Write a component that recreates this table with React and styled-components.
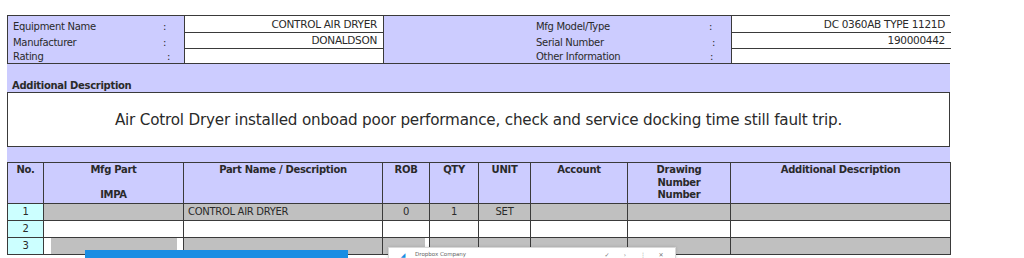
import React from 'react';
import styled, { createGlobalStyle } from 'styled-components';

const Global = createGlobalStyle`
  html, body { margin: 0; padding: 0; background: #fff; overflow: hidden; }
  body { font-family: "DejaVu Sans", Verdana, sans-serif; color: #2a2a2a; }
`;

const LAV = '#ccccff';
const LINE = '#3a3a3a';

const Page = styled.div`
  position: relative;
  width: 1024px;
  height: 258px;
  overflow: hidden;
`;

const Sheet = styled.div`
  width: 943px;
  margin-left: 7px;
  padding-top: 15px;
  font-size: 10px;
  letter-spacing: -0.3px;
`;

const Info = styled.div`
  display: grid;
  grid-template-columns: 176px 200px 347px 220px;
  border: 1px solid ${LINE};
  background: ${LAV};
  box-sizing: border-box;
`;

const LabelCol = styled.div`
  display: flex;
  flex-direction: column;
  padding-top: 2px;
`;

const LabelRow = styled.div`
  display: flex;
  height: ${p => p.$h}px;
  align-items: center;
  padding-left: ${p => p.$pl}px;
`;

const LabelText = styled.span`
  width: ${p => p.$w}px;
`;

const ValueCol = styled.div`
  display: flex;
  flex-direction: column;
  background: #fff;
  border-left: 1px solid ${LINE};
  border-right: ${p => (p.$edge ? 'none' : `1px solid ${LINE}`)};
`;

const ValueCell = styled.div`
  height: ${p => p.$h}px;
  border-bottom: ${p => (p.$last ? 'none' : `1px solid ${LINE}`)};
  text-align: right;
  padding-right: 6px;
  line-height: ${p => p.$h}px;
  font-size: 10.5px;
`;

const Band = styled.div`
  background: ${LAV};
  height: ${p => p.$h}px;
  display: flex;
  align-items: flex-end;
  padding-left: 5px;
  box-sizing: border-box;
  border-bottom: ${p => (p.$line ? `1px solid ${LINE}` : 'none')};
  font-weight: bold;
  padding-bottom: 1px;
`;

const DescBox = styled.div`
  height: 54px;
  border: 1px solid ${LINE};
  border-top: none;
  display: flex;
  align-items: center;
  justify-content: center;
  font-size: 15.2px;
  letter-spacing: -0.2px;
  padding-top: 1px;
  box-sizing: border-box;
`;

const Parts = styled.table`
  border-collapse: collapse;
  width: 943px;
  table-layout: fixed;
  font-size: 10px;
  letter-spacing: -0.3px;
`;

const Th = styled.th`
  background: ${LAV};
  border: 1px solid ${LINE};
  height: 39px;
  vertical-align: top;
  padding: 1px 2px 0;
  line-height: 12.5px;
  font-weight: bold;
`;

const Td = styled.td`
  height: 16px;
  padding: 0 4px;
  border: 1px solid ${LINE};
  background: ${p => p.$bg || '#fff'};
  text-align: ${p => p.$align || 'center'};
  line-height: 14px;
  box-shadow: ${p => p.$gap || 'none'};
`;

const BlueBar = styled.div`
  position: absolute;
  left: 85px;
  top: 250px;
  width: 263px;
  height: 20px;
  background: #1a8de3;
`;

const Popup = styled.div`
  position: absolute;
  left: 388px;
  top: 247px;
  width: 288px;
  height: 30px;
  background: #fff;
  border: 1px solid #d8d8d8;
  box-shadow: 0 0 3px rgba(0, 0, 0, 0.15);
  display: flex;
  align-items: flex-start;
  padding: 3px 8px 0;
  box-sizing: border-box;
  font-size: 5.5px;
  line-height: 7px;
  color: #666;
  gap: 6px;
`;

const PopTitle = styled.span`
  flex: 1;
`;

const PopIcon = styled.span`
  width: 12px;
  text-align: center;
  font-size: 6px;
  color: ${p => p.$color || '#777'};
`;

const cols = [36, 140, 199, 47, 49, 52, 97, 103, 220];

export default function App() {
  return (
    <Page>
      <Global />
      <Sheet>
        <Info>
          <LabelCol>
            <LabelRow $h={16} $pl={5}><LabelText $w={150}>Equipment Name</LabelText>:</LabelRow>
            <LabelRow $h={16} $pl={5}><LabelText $w={150}>Manufacturer</LabelText>:</LabelRow>
            <LabelRow $h={12} $pl={5}><LabelText $w={154}>Rating</LabelText>:</LabelRow>
          </LabelCol>
          <ValueCol>
            <ValueCell $h={16}>CONTROL AIR DRYER</ValueCell>
            <ValueCell $h={15}>DONALDSON</ValueCell>
            <ValueCell $h={14} $last />
          </ValueCol>
          <LabelCol>
            <LabelRow $h={16} $pl={152}><LabelText $w={173}>Mfg Model/Type</LabelText>:</LabelRow>
            <LabelRow $h={16} $pl={152}><LabelText $w={176}>Serial Number</LabelText>:</LabelRow>
            <LabelRow $h={12} $pl={152}><LabelText $w={174}>Other Information</LabelText>:</LabelRow>
          </LabelCol>
          <ValueCol $edge>
            <ValueCell $h={16}>DC 0360AB TYPE 1121D</ValueCell>
            <ValueCell $h={15}>190000442</ValueCell>
            <ValueCell $h={14} $last />
          </ValueCol>
        </Info>
        <Band $h={29} $line>Additional Description</Band>
        <DescBox>Air Cotrol Dryer installed onboad poor performance, check and service docking time still fault trip.</DescBox>
        <Band $h={15} />
        <Parts>
          <colgroup>
            {cols.map((w, i) => <col key={i} style={{ width: w }} />)}
          </colgroup>
          <thead>
            <tr>
              <Th>No.</Th>
              <Th>Mfg Part<br /><br />IMPA</Th>
              <Th>Part Name / Description</Th>
              <Th>ROB</Th>
              <Th>QTY</Th>
              <Th>UNIT</Th>
              <Th>Account</Th>
              <Th>Drawing<br />Number<br />Number</Th>
              <Th>Additional Description</Th>
            </tr>
          </thead>
          <tbody>
            <tr>
              <Td $bg="#ccffff">1</Td>
              <Td $bg="#c0c0c0" />
              <Td $bg="#c0c0c0" $align="left">CONTROL AIR DRYER</Td>
              <Td $bg="#c0c0c0">0</Td>
              <Td $bg="#c0c0c0">1</Td>
              <Td $bg="#c0c0c0">SET</Td>
              <Td $bg="#c0c0c0" />
              <Td $bg="#c0c0c0" />
              <Td $bg="#c0c0c0" />
            </tr>
            <tr>
              <Td $bg="#ccffff">2</Td>
              <Td /><Td /><Td /><Td /><Td /><Td /><Td /><Td />
            </tr>
            <tr>
              <Td $bg="#ccffff">3</Td>
              <Td $bg="#c0c0c0" $gap="inset 7px 0 0 #fff, inset -6px 0 0 #fff" />
              <Td $bg="#c0c0c0" />
              <Td $bg="#c0c0c0" $gap="inset -4px 0 0 #fff" />
              <Td $bg="#c0c0c0" />
              <Td $bg="#c0c0c0" />
              <Td $bg="#c0c0c0" />
              <Td $bg="#c0c0c0" />
              <Td $bg="#c0c0c0" />
            </tr>
          </tbody>
        </Parts>
      </Sheet>
      <BlueBar />
      <Popup>
        <PopIcon $color="#1a8de3">◢</PopIcon>
        <PopTitle>Dropbox Company</PopTitle>
        <PopIcon>✓</PopIcon>
        <PopIcon>›</PopIcon>
        <PopIcon>⋮</PopIcon>
        <PopIcon>✕</PopIcon>
      </Popup>
    </Page>
  );
}
